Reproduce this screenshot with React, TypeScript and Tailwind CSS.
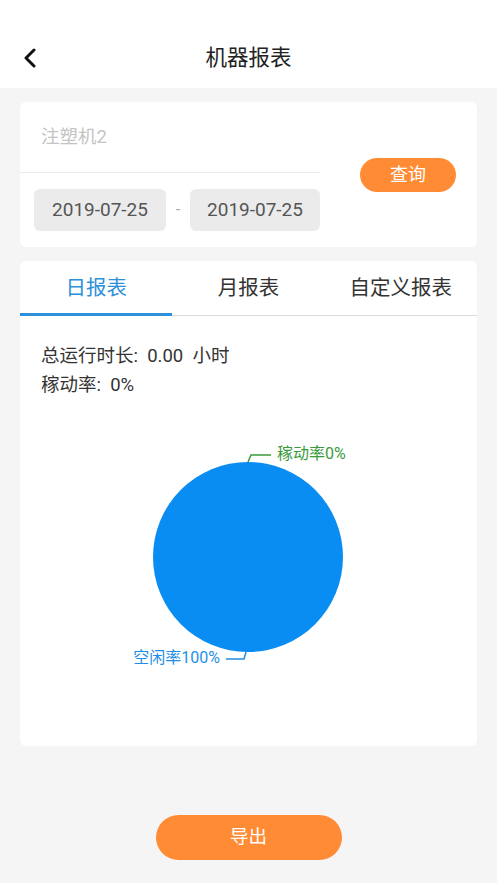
import React from 'react';

const font = { fontFamily: 'Roboto, "Noto Sans CJK SC", sans-serif' };

const tabs = ['日报表', '月报表', '自定义报表'];

const PieChart: React.FC = () => (
  <svg width="457" height="346" viewBox="0 0 457 346" className="block">
    <circle cx="228" cy="157" r="95" fill="#0a8df2" />
    <polyline points="228,62 231,55 251,55" fill="none" stroke="#3a9a3a" strokeWidth="1.5" />
    <text x="257" y="55" dominantBaseline="middle" fontSize="16" fill="#3a9a3a" style={font}>
      稼动率0%
    </text>
    <polyline points="226,252 224,259 206,259" fill="none" stroke="#1f8fe6" strokeWidth="1.5" />
    <text x="200" y="259" dominantBaseline="middle" textAnchor="end" fontSize="16" fill="#1f8fe6" style={font}>
      空闲率100%
    </text>
  </svg>
);

export default function App() {
  const [active, setActive] = React.useState(0);

  return (
    <div className="w-[497px] h-[883px] bg-[#f5f5f5] flex flex-col" style={font}>
      {/* header */}
      <div className="h-[88px] bg-white pt-[28px] shrink-0">
        <div className="relative h-[60px] flex items-center justify-center">
          <svg className="absolute left-[22px] top-[20px]" width="16" height="20" viewBox="0 0 16 20">
            <polyline points="12,2 4,10 12,18" fill="none" stroke="#111" strokeWidth="3" strokeLinecap="round" strokeLinejoin="round" />
          </svg>
          <span className="text-[21.5px] text-[#222]">机器报表</span>
        </div>
      </div>

      {/* filter card */}
      <div className="mx-[20px] mt-[14px] h-[145px] bg-white rounded-md flex items-center">
        <div className="w-[300px] h-full flex flex-col">
          <div className="h-[71px] border-b border-[#ececec] flex items-center pl-[21px] pt-[2px]">
            <span className="text-[18.5px] text-[#c4c4c4]">注塑机2</span>
          </div>
          <div className="flex items-center pl-[14px] mt-[16px]">
            <div className="w-[132px] h-[42px] bg-[#ebebeb] rounded-md flex items-center justify-center text-[19px] text-[#555]">
              2019-07-25
            </div>
            <div className="w-[24px] text-center text-[#aaa] text-[16px]">-</div>
            <div className="w-[130px] h-[42px] bg-[#ebebeb] rounded-md flex items-center justify-center text-[19px] text-[#555]">
              2019-07-25
            </div>
          </div>
        </div>
        <button className="ml-[40px] w-[96px] h-[34px] rounded-full bg-[#ff8c35] text-white text-[18px] flex items-center justify-center">
          查询
        </button>
      </div>

      {/* report card */}
      <div className="mx-[20px] mt-[14px] h-[485px] bg-white rounded-md overflow-hidden">
        <div className="grid grid-cols-3 h-[55px] border-b border-[#dcdcdc]">
          {tabs.map((t, i) => (
            <button
              key={t}
              onClick={() => setActive(i)}
              className={`relative flex items-center justify-center text-[20.5px] ${
                active === i ? 'text-[#2e90d8]' : 'text-[#333]'
              }`}
            >
              {t}
              {active === i && <span className="absolute left-0 right-0 bottom-[-1px] h-[3px] bg-[#2e90d8]" />}
            </button>
          ))}
        </div>
        <div className="pl-[21px] pt-[26px] text-[18.5px] leading-[29px] text-[#333]">
          <div>总运行时长:{'\u00a0\u00a0'}0.00{'\u00a0\u00a0'}小时</div>
          <div>稼动率:{'\u00a0\u00a0'}0%</div>
        </div>
        <PieChart />
      </div>

      {/* export */}
      <div className="flex justify-center mt-[69px]">
        <button className="w-[186px] h-[45px] rounded-full bg-[#ff8c35] text-white text-[18.5px]">导出</button>
      </div>
    </div>
  );
}
